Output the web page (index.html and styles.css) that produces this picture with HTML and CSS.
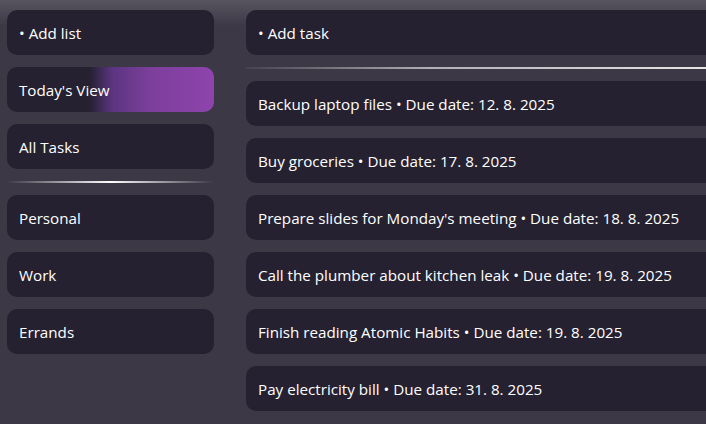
FILE: index.html
```html
<!DOCTYPE html>
<html lang="en">
<head>
<meta charset="utf-8">
<title>Tasks</title>
<link rel="stylesheet" href="styles.css">
</head>
<body>
<div class="app">
  <aside class="sidebar">
    <div class="card">• Add list</div>
    <div class="card active">Today's View</div>
    <div class="card">All Tasks</div>
    <div class="sep sep-center"></div>
    <div class="card">Personal</div>
    <div class="card">Work</div>
    <div class="card">Errands</div>
  </aside>
  <main class="main">
    <div class="card">• Add task</div>
    <div class="sep sep-right"></div>
    <div class="card">Backup laptop files • Due date: 12. 8. 2025</div>
    <div class="card">Buy groceries • Due date: 17. 8. 2025</div>
    <div class="card">Prepare slides for Monday's meeting • Due date: 18. 8. 2025</div>
    <div class="card">Call the plumber about kitchen leak • Due date: 19. 8. 2025</div>
    <div class="card">Finish reading Atomic Habits • Due date: 19. 8. 2025</div>
    <div class="card">Pay electricity bill • Due date: 31. 8. 2025</div>
  </main>
</div>
</body>
</html>
```
FILE: styles.css
```css
html, body {
  margin: 0;
  height: 100%;
  overflow: hidden;
}
body {
  background: linear-gradient(#58545f 0px, #3d3846 26px, #3d3846 100%);
  color: #ffffff;
  font-family: "Open Sans", "Noto Sans", sans-serif;
  font-size: 15.2px;
}
.app {
  display: flex;
  gap: 32px;
  padding: 10px 0 0 7px;
}
.sidebar {
  flex: 0 0 207px;
  display: flex;
  flex-direction: column;
  gap: 12px;
}
.main {
  flex: 1 1 auto;
  min-width: 0;
  display: flex;
  flex-direction: column;
  gap: 12px;
}
.card {
  height: 45px;
  box-sizing: border-box;
  padding: 0 12px;
  display: flex;
  align-items: center;
  background: #252131;
  border-radius: 10px;
  white-space: nowrap;
}
.main .card {
  border-top-right-radius: 0;
  border-bottom-right-radius: 0;
}
.active {
  background: linear-gradient(90deg, #252131 40%, #5c3581 51%, #7d3f9c 70%, #8e44ad 100%);
}
.sep {
  height: 2px;
}
.sep-center {
  background: linear-gradient(90deg, rgba(255,255,255,0) 0%, #ffffff 50%, rgba(255,255,255,0) 100%);
}
.sep-right {
  background: linear-gradient(90deg, rgba(255,255,255,0.05) 0%, rgba(255,255,255,0.6) 40%, #e6e6e6 100%);
}
```
